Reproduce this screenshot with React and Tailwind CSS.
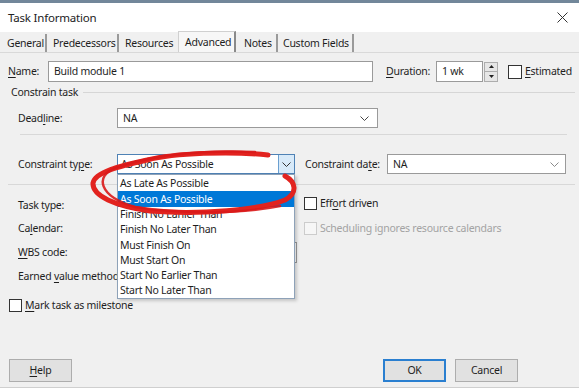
import React from "react";

function Chevron({ color = "#555" }) {
  return (
    <svg width="9" height="5" viewBox="0 0 9 5">
      <polyline points="0.5,0.5 4.5,4.5 8.5,0.5" fill="none" stroke={color} strokeWidth="1" />
    </svg>
  );
}

function Check({ disabled }) {
  return (
    <div
      className={
        disabled
          ? "w-[13px] h-[13px] border border-[#cccccc] bg-[#f6f6f6] shrink-0"
          : "w-[13px] h-[13px] border border-[#333333] bg-white shrink-0"
      }
    />
  );
}

function U({ children }) {
  return <span className="underline underline-offset-[2px]">{children}</span>;
}

const items = [
  "As Late As Possible",
  "As Soon As Possible",
  "Finish No Earlier Than",
  "Finish No Later Than",
  "Must Finish On",
  "Must Start On",
  "Start No Earlier Than",
  "Start No Later Than",
];

export default function App() {
  return (
    <div className="relative w-[579px] h-[388px] overflow-hidden bg-[#f0f0f0] font-['Noto_Sans',sans-serif] text-[10.5px] tracking-[-0.25px] text-[#1e1e1e] leading-none flex flex-col border-b border-[#cfcfcf] whitespace-nowrap">
      <div className="h-[3px] bg-[#72879a] shrink-0" />
      <div className="h-[29px] bg-white flex items-center justify-between pl-[8px] pr-[11px] shrink-0">
        <span className="text-[11.5px] tracking-[-0.2px] text-[#222]">Task Information</span>
        <svg width="11" height="11" viewBox="0 0 11 11">
          <path d="M0.5 0.5 L10.5 10.5 M10.5 0.5 L0.5 10.5" stroke="#333" strokeWidth="1" />
        </svg>
      </div>

      {/* tabs */}
      <div className="h-[21px] flex items-end border-b border-[#d9d9d9] pl-[2px] shrink-0">
        <div className="h-[18px] w-[45px] pl-[5px] flex items-center border-r-2 border-[#9a9a9a]">General</div>
        <div className="h-[18px] w-[72px] pl-[6px] flex items-center border-r-2 border-[#9a9a9a]">Predecessors</div>
        <div className="h-[18px] w-[59px] pl-[6px] flex items-center">Resources</div>
        <div className="h-[21px] w-[58px] pl-[6px] flex items-center border-l border-t border-r-2 border-l-[#d0d0d0] border-t-[#d0d0d0] border-r-[#8a8a8a] bg-[#f7f7f7]">Advanced</div>
        <div className="h-[18px] w-[42px] pl-[8px] flex items-center border-r-2 border-[#9a9a9a]">Notes</div>
        <div className="h-[18px] w-[76px] pl-[5px] flex items-center border-r-2 border-[#9a9a9a]">Custom Fields</div>
      </div>

      {/* name row */}
      <div className="mt-[8px] h-[21px] flex items-center shrink-0">
        <div className="w-[48px] pl-[8px]"><U>N</U>ame:</div>
        <div className="w-[325px] h-[21px] border border-[#9a9a9a] bg-white flex items-center pl-[5px]">Build module 1</div>
        <div className="ml-[13px] w-[50px]"><U>D</U>uration:</div>
        <div className="w-[47px] h-[21px] border border-[#9a9a9a] bg-white flex items-center pl-[5px]">1 wk</div>
        <div className="ml-[1px] w-[14px] h-[20px] border border-[#adadad] bg-[#e6e6e6] flex flex-col">
          <div className="flex-1 flex items-center justify-center border-b border-[#adadad]">
            <svg width="5" height="3" viewBox="0 0 5 3"><polygon points="0,3 2.5,0 5,3" fill="#222" /></svg>
          </div>
          <div className="flex-1 flex items-center justify-center">
            <svg width="5" height="3" viewBox="0 0 5 3"><polygon points="0,0 2.5,3 5,0" fill="#222" /></svg>
          </div>
        </div>
        <div className="ml-[10px] w-[14px] h-[14px] border border-[#333] bg-white" />
        <div className="ml-[3px]"><U>E</U>stimated</div>
      </div>

      {/* group header */}
      <div className="mt-[3px] h-[14px] flex items-center pl-[11px] shrink-0">
        <span>Constrain task</span>
        <div className="flex-1 ml-[5px] mr-[4px] border-t border-[#d6d6d6]" />
      </div>

      {/* deadline */}
      <div className="mt-[9px] h-[20px] flex items-center shrink-0">
        <div className="w-[117px] pl-[18px]">Dead<U>l</U>ine:</div>
        <div className="w-[261px] h-[20px] border border-[#9a9a9a] bg-white flex items-center justify-between pl-[5px] pr-[8px]">
          <span>NA</span>
          <Chevron color="#444" />
        </div>
      </div>

      <div className="mt-[6px] h-px ml-[20px] mr-[12px] bg-[#d8d8d8] shrink-0" />

      {/* constraint row */}
      <div className="mt-[19px] h-[20px] flex items-center shrink-0">
        <div className="w-[117px] pl-[18px]">Constraint ty<U>p</U>e:</div>
        <div className="w-[178px] h-[20px] border border-[#4f82b5] bg-white flex items-center">
          <span className="flex-1 pl-[3px]">As Soon As Possible</span>
          <div className="w-[16px] h-full bg-[#d8eaf9] border-l border-[#6a9fd0] flex items-center justify-center">
            <Chevron color="#333" />
          </div>
        </div>
        <div className="ml-[10px] w-[82px]">Constraint da<U>t</U>e:</div>
        <div className="w-[179px] h-[20px] border border-[#9a9a9a] bg-white flex items-center justify-between pl-[5px] pr-[6px]">
          <span>NA</span>
          <Chevron color="#8a8a8a" />
        </div>
      </div>

      <div className="mt-[10px] h-px ml-[8px] mr-[4px] bg-[#d8d8d8] shrink-0" />

      {/* lower section */}
      <div className="mt-[10px] flex shrink-0">
        <div className="w-[300px] flex flex-col">
          <div className="h-[20px] flex items-center">
            <div className="w-[117px] pl-[18px]">Task type:</div>
            <div className="w-[177px] h-[20px] border border-[#9a9a9a] bg-white" />
          </div>
          <div className="mt-[3px] h-[20px] flex items-center">
            <div className="w-[117px] pl-[18px]">Ca<U>l</U>endar:</div>
            <div className="w-[177px] h-[20px] border border-[#9a9a9a] bg-white" />
          </div>
          <div className="mt-[4px] h-[20px] flex items-center">
            <div className="w-[117px] pl-[18px]"><U>W</U>BS code:</div>
            <div className="w-[180px] h-[21px] border border-[#9a9a9a] bg-white" />
          </div>
          <div className="mt-[4px] h-[20px] flex items-center">
            <div className="w-[117px] pl-[18px]">Earned <U>v</U>alue method:</div>
            <div className="w-[177px] h-[20px] border border-[#9a9a9a] bg-white" />
          </div>
        </div>
        <div className="ml-[4px] flex flex-col">
          <div className="mt-[2px] h-[13px] flex items-center">
            <Check />
            <span className="ml-[3px]">Eff<U>o</U>rt driven</span>
          </div>
          <div className="mt-[12px] h-[13px] flex items-center">
            <Check disabled />
            <span className="ml-[3px] text-[#a3a3a3]">Scheduling ignores resource calendars</span>
          </div>
        </div>
      </div>

      <div className="mt-[13px] h-[13px] flex items-center pl-[9px] shrink-0">
        <Check />
        <span className="ml-[3px]"><U>M</U>ark task as milestone</span>
      </div>

      <div className="flex-1" />

      {/* buttons */}
      <div className="h-[23px] mb-[5px] flex items-center shrink-0">
        <div className="ml-[9px] w-[63px] h-[23px] bg-[#e1e1e1] border border-[#adadad] flex items-center justify-center"><U>H</U>elp</div>
        <div className="flex-1" />
        <div className="w-[63px] h-[23px] bg-[#e1e1e1] border-2 border-[#2a7fd0] flex items-center justify-center">OK</div>
        <div className="ml-[9px] mr-[61px] w-[63px] h-[23px] bg-[#e1e1e1] border border-[#adadad] flex items-center justify-center">Cancel</div>
      </div>

      {/* dropdown list */}
      <div className="absolute left-[117px] top-[174px] w-[178px] h-[125px] bg-white border border-[#8ea2b8] shadow-[2px_2px_3px_rgba(0,0,0,0.18)] pt-[1px]">
        {items.map((t, i) => (
          <div
            key={t}
            className={
              i === 1
                ? "h-[15.3px] flex items-center pl-[2px] bg-[#0078d7] text-white"
                : "h-[15.3px] flex items-center pl-[2px]"
            }
          >
            {t}
          </div>
        ))}
      </div>

      {/* red brush ellipse */}
      <svg className="absolute left-0 top-0 pointer-events-none" width="579" height="388" viewBox="0 0 579 388">
        <path
          d="M 268 155 C 230 151, 175 153, 147 160 C 120 166, 95 172, 93 183 C 92 196, 115 206, 150 211 C 200 215, 260 210, 285 200 C 298 193, 296 182, 285 176"
          fill="none"
          stroke="#e2231f"
          strokeWidth="5"
          strokeLinecap="round"
        />
        <path
          d="M 255 152 C 200 150, 150 156, 115 168 C 95 176, 98 196, 135 207 C 180 214, 240 214, 280 206"
          fill="none"
          stroke="#d9191a"
          strokeWidth="2.5"
          strokeLinecap="round"
          opacity="0.9"
        />
      </svg>
    </div>
  );
}
